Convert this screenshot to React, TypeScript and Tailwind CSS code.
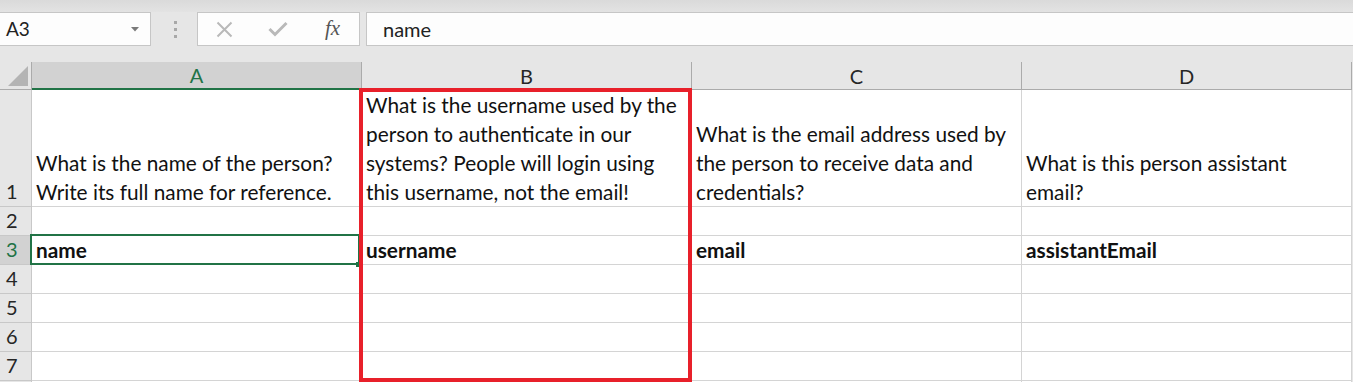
import React from "react";

const COLS = ["A", "B", "C", "D"];

// lines as Excel wrapped them in the row 1 cells
const HEADER_LINES: string[][] = [
  ["What is the name of the person?", "Write its full name for reference."],
  [
    "What is the username used by the",
    "person to authenticate in our",
    "systems? People will login using",
    "this username, not the email!",
  ],
  ["What is the email address used by", "the person to receive data and", "credentials?"],
  ["What is this person assistant", "email?"],
];

const KEYS = ["name", "username", "email", "assistantEmail"];

function RowHeader({ n, active, tall }: { n?: number; active?: boolean; tall?: boolean }) {
  return (
    <div
      className={`w-[32px] shrink-0 border-r border-b border-[#c8c8c8] flex items-end pl-[6px] pb-[1px] text-[20px] leading-[28px] ${
        tall ? "h-[117px]" : "h-[29px]"
      } ${active ? "bg-[#d2d2d2] text-[#217346]" : "bg-[#e6e6e6] text-[#262626]"}`}
    >
      {n}
    </div>
  );
}

function Cell({ children, tall, bold }: { children?: React.ReactNode; tall?: boolean; bold?: boolean }) {
  return (
    <div
      className={`w-[330px] shrink-0 border-r border-b border-[#d4d4d4] bg-white flex items-end px-[4px] text-[20.8px] leading-[29px] text-[#111] whitespace-nowrap overflow-hidden ${
        tall ? "h-[117px]" : "h-[29px]"
      } ${bold ? "font-bold" : ""}`}
    >
      <div className="w-full">{children}</div>
    </div>
  );
}

export default function App() {
  return (
    <div
      className="relative w-[1353px] h-[382px] overflow-hidden bg-[#e6e6e6]"
      style={{ fontFamily: "Lato, 'Noto Sans', sans-serif" }}
    >
      {/* top stripe */}
      <div className="h-[12px] bg-gradient-to-b from-[#dadada] to-[#e3e3e3]" />

      {/* formula bar */}
      <div className="flex h-[34px]">
        <div className="w-[151px] shrink-0 bg-[#fdfdfd] border border-[#c6c6c6] border-l-0 flex items-center justify-between pl-[6px] pr-[11px]">
          <span className="text-[19px] text-[#222]">A3</span>
          <svg width="8" height="5" viewBox="0 0 8 5">
            <path d="M0 0h8L4 4.5z" fill="#7a7a7a" />
          </svg>
        </div>
        <div className="w-[46px] shrink-0 flex flex-col items-center justify-center gap-[4px] pl-[2px]">
          <span className="w-[3px] h-[3px] bg-[#a8a8a8]" />
          <span className="w-[3px] h-[3px] bg-[#a8a8a8]" />
          <span className="w-[3px] h-[3px] bg-[#a8a8a8]" />
        </div>
        <div className="w-[163px] shrink-0 bg-[#fdfdfd] border border-[#c6c6c6] flex items-center">
          <div className="w-[52px] flex justify-center">
            <svg width="17" height="17" viewBox="0 0 17 17">
              <path d="M1.5 1.5l14 14M15.5 1.5l-14 14" stroke="#b9b9b9" strokeWidth="2" fill="none" />
            </svg>
          </div>
          <div className="w-[56px] flex justify-center">
            <svg width="20" height="16" viewBox="0 0 20 16">
              <path d="M1.5 8l5.5 5.5L18.5 2" stroke="#b9b9b9" strokeWidth="3" fill="none" />
            </svg>
          </div>
          <div className="flex-1 flex justify-center">
            <span
              className="italic text-[21px] text-[#555]"
              style={{ fontFamily: "'Liberation Serif', serif" }}
            >
              fx
            </span>
          </div>
        </div>
        <div className="w-[6px] shrink-0" />
        <div className="flex-1 bg-[#fdfdfd] border border-r-0 border-[#c6c6c6] flex items-center pl-[16px]">
          <span className="text-[20px] text-[#222]">name</span>
        </div>
      </div>

      <div className="h-[16px]" />

      {/* column header */}
      <div className="flex h-[28px]">
        <div className="w-[32px] shrink-0 border-r border-b border-[#ababab] bg-[#e6e6e6] flex items-end justify-end pr-[3px] pb-[3px]">
          <svg width="20" height="20" viewBox="0 0 20 20">
            <path d="M20 0V20H0z" fill="#b4b4b4" />
          </svg>
        </div>
        {COLS.map((c, i) => (
          <div
            key={c}
            className={`w-[330px] shrink-0 border-r flex items-center justify-center text-[20px] ${
              i === 0
                ? "bg-[#d2d2d2] text-[#217346] border-b-2 border-b-[#217346] border-r-[#ababab]"
                : "bg-[#e6e6e6] text-[#262626] border-b border-[#ababab]"
            }`}
          >
            {c}
          </div>
        ))}
      </div>

      {/* rows */}
      <div className="flex">
        <RowHeader n={1} tall />
        {HEADER_LINES.map((lines, i) => (
          <Cell key={i} tall>
            {lines.map((l) => (
              <div key={l}>{l}</div>
            ))}
          </Cell>
        ))}
      </div>
      <div className="flex">
        <RowHeader n={2} />
        {COLS.map((c) => (
          <Cell key={c} />
        ))}
      </div>
      <div className="flex">
        <RowHeader n={3} active />
        {KEYS.map((k) => (
          <Cell key={k} bold>
            {k}
          </Cell>
        ))}
      </div>
      {[4, 5, 6, 7].map((n) => (
        <div key={n} className="flex">
          <RowHeader n={n} />
          {COLS.map((c) => (
            <Cell key={c} />
          ))}
        </div>
      ))}
      <div className="flex">
        <RowHeader />
        {COLS.map((c) => (
          <Cell key={c} />
        ))}
      </div>

      {/* active cell A3 */}
      <div className="absolute left-[30px] top-[234px] w-[330px] h-[31px] border-2 border-[#217346]" />
      <div className="absolute left-[356px] top-[262px] w-[5px] h-[5px] bg-[#217346]" />

      {/* highlight around column B */}
      <div className="absolute left-[359px] top-[88px] w-[333px] h-[294px] border-[4px] border-[#e8202a]" />
    </div>
  );
}
